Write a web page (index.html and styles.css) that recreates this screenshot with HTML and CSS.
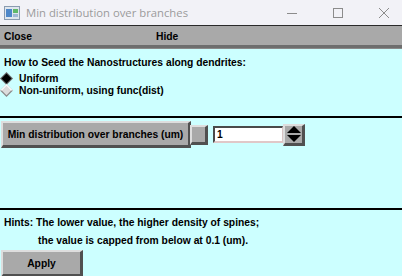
FILE: index.html
```html
<!DOCTYPE html>
<html>
<head>
<meta charset="utf-8">
<link rel="stylesheet" href="styles.css">
</head>
<body>
<div class="win">
  <div class="titlebar">
    <svg class="appicon" width="16" height="14" viewBox="0 0 16 14">
      <rect x="0.5" y="0.5" width="15" height="13" fill="#dfe6ee" stroke="#8a9bb0"/>
      <rect x="2" y="3" width="6" height="8" fill="#4e87c9"/>
      <rect x="9" y="3" width="5" height="4" fill="#5fb86a"/>
      <rect x="9" y="8" width="5" height="3" fill="#9fb8d4"/>
    </svg>
    <span class="title">Min distribution over branches</span>
    <div class="controls">
      <svg width="12" height="12" viewBox="0 0 12 12"><line x1="1" y1="6.5" x2="11" y2="6.5" stroke="#8c8c8c" stroke-width="1"/></svg>
      <svg width="12" height="12" viewBox="0 0 12 12"><rect x="1.5" y="1.5" width="9" height="9" fill="none" stroke="#8c8c8c" stroke-width="1"/></svg>
      <svg width="12" height="12" viewBox="0 0 12 12"><path d="M1 1 L11 11 M11 1 L1 11" stroke="#8c8c8c" stroke-width="1"/></svg>
    </div>
  </div>
  <div class="menubar">
    <span class="menu-item">Close</span>
    <span class="menu-item">Hide</span>
  </div>
  <div class="body">
    <div class="section seed">
      <div class="label">How to Seed the Nanostructures along dendrites:</div>
      <div class="radio">
        <svg width="13" height="13" viewBox="0 0 13 13"><path d="M6.5 0 L13 6.5 L6.5 13 L0 6.5 Z" fill="#6a6a6a"/><path d="M6.5 1.5 L11.5 6.5 L6.5 11.5 L1.5 6.5 Z" fill="#000"/></svg>
        <span>Uniform</span>
      </div>
      <div class="radio">
        <svg width="13" height="13" viewBox="0 0 13 13"><path d="M6.5 0 L13 6.5 L6.5 13 L0 6.5 Z" fill="#8a8a8a"/><path d="M6.5 0 L13 6.5 L0 6.5 Z" fill="#ffffff"/><path d="M6.5 1.8 L11.2 6.5 L6.5 11.2 L1.8 6.5 Z" fill="#dcdcdc"/></svg>
        <span>Non-uniform, using func(dist)</span>
      </div>
    </div>
    <div class="sep"></div>
    <div class="section params">
      <div class="row">
        <div class="btn big">Min distribution over branches (um)</div>
        <div class="btn square"></div>
        <div class="input">1</div>
        <div class="btn spin">
          <svg width="14" height="16" viewBox="0 0 14 16"><path d="M7 0 L14 7 L0 7 Z" fill="#000"/><path d="M0 9 L14 9 L7 16 Z" fill="#000"/></svg>
        </div>
      </div>
    </div>
    <div class="sep"></div>
    <div class="section hints">
      <div class="hint1">Hints: The lower value, the higher density of spines;</div>
      <div class="hint2">the value is capped from below at 0.1 (um).</div>
      <div class="btn apply">Apply</div>
    </div>
  </div>
</div>
</body>
</html>
```

FILE: styles.css
```css
html, body {
  margin: 0;
  padding: 0;
  width: 402px;
  height: 276px;
  overflow: hidden;
}
.win {
  width: 402px;
  height: 276px;
  display: flex;
  flex-direction: column;
  font-family: "Liberation Sans", Arial, sans-serif;
  font-weight: bold;
  font-size: 10.3px;
  color: #000;
}
.titlebar {
  flex: none;
  height: 26px;
  box-sizing: border-box;
  background: #f2f2f7;
  border-bottom: 1px solid #2a2a2a;
  display: flex;
  align-items: center;
  padding-left: 4px;
}
.appicon { flex: none; }
.title {
  margin-left: 6px;
  font-family: "Open Sans", "Noto Sans", sans-serif;
  font-weight: normal;
  font-size: 11.3px;
  color: #9b9b9b;
}
.controls {
  margin-left: auto;
  display: flex;
  gap: 34px;
  padding-right: 12px;
}
.menubar {
  flex: none;
  height: 22px;
  box-sizing: border-box;
  background: #a9a9a9;
  border-bottom: 3px solid #6e6e6e;
  display: flex;
  align-items: center;
  padding: 1px 0 0 4px;
}
.menu-item:first-child { width: 152px; }
.body {
  flex: 1;
  min-height: 0;
  background: #ccffff;
  display: flex;
  flex-direction: column;
  border-top: 1px solid #8a8a8a;
}
.section { box-sizing: border-box; flex: none; }
.seed {
  height: 67px;
  padding: 8px 0 0 4px;
}
.label { line-height: 12px; margin-bottom: 3px; }
.radio {
  display: flex;
  align-items: center;
  gap: 6px;
  height: 12px;
  margin-left: -4px;
}
.sep {
  height: 2px;
  background: #000;
  flex: none;
}
.params {
  height: 90px;
  padding: 3px 0 0 1px;
}
.row {
  display: flex;
  align-items: center;
}
.btn {
  box-sizing: border-box;
  background: #a9a9a9;
  border-style: solid;
  border-width: 2px 3px 3px 2px;
  border-color: #dedede #505050 #505050 #dedede;
  display: flex;
  align-items: center;
  justify-content: center;
}
.big {
  width: 190px;
  height: 27px;
}
.square {
  width: 18px;
  height: 20px;
  margin-left: -1px;
}
.input {
  box-sizing: border-box;
  width: 70px;
  height: 17px;
  margin-left: 5px;
  background: #fff;
  border-style: solid;
  border-width: 2px 1px 2px 2px;
  border-color: #4a4a4a #d8c4c4 #e0c8c8 #4a4a4a;
  line-height: 13px;
  padding-left: 2px;
}
.spin {
  width: 22px;
  height: 22px;
}
.hints {
  flex: 1;
  min-height: 0;
  padding: 7px 0 0 4px;
  display: flex;
  flex-direction: column;
}
.hint1 { line-height: 12px; }
.hint2 { line-height: 12px; margin-top: 6px; padding-left: 34px; }
.apply {
  flex: none;
  width: 82px;
  height: 27px;
  margin-top: 3px;
  margin-left: -3px;
}
```
